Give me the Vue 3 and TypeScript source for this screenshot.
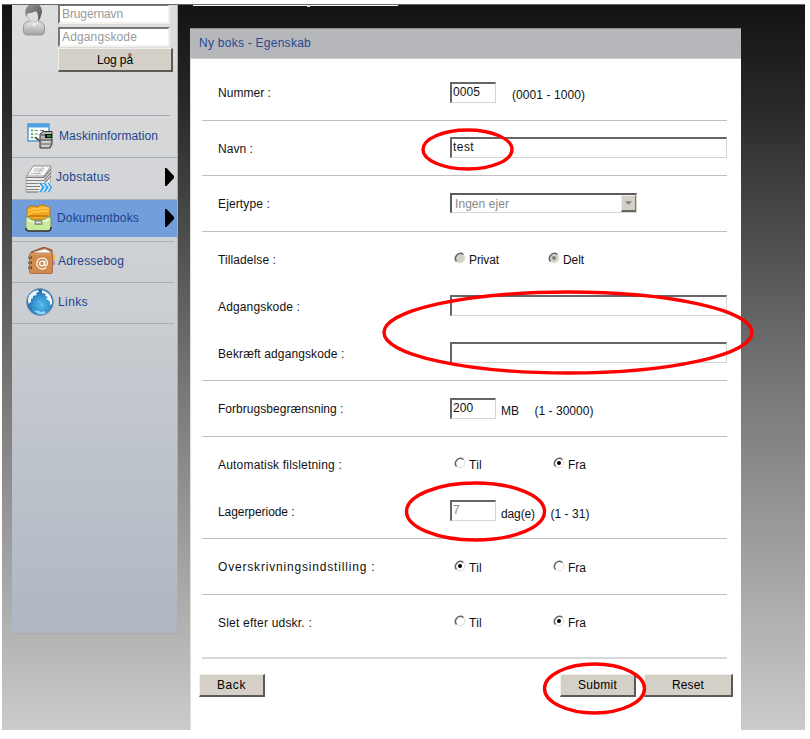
<script setup lang="ts">
import { reactive } from 'vue'

interface Field {
  label: string
  width: number
  kind: 'text' | 'number' | 'select' | 'radio'
  value?: string
  disabled?: boolean
  unit?: string
  unitWidth?: number
  range?: string
  rangeWidth?: number
  options?: { text: string; width: number }[]
}

const sections = reactive<Field[][]>([
  [{ label: 'Nummer :', width: 53, kind: 'number', value: '0005', range: '(0001 - 1000)', rangeWidth: 73 }],
  [{ label: 'Navn :', width: 35, kind: 'text', value: 'test' }],
  [{ label: 'Ejertype :', width: 52, kind: 'select', value: 'Ingen ejer' }],
  [
    {
      label: 'Tilladelse :', width: 58, kind: 'radio', value: 'Delt', disabled: true,
      options: [{ text: 'Privat', width: 30 }, { text: 'Delt', width: 21 }],
    },
    { label: 'Adgangskode :', width: 82, kind: 'text', value: '' },
    { label: 'Bekræft adgangskode :', width: 126.5, kind: 'text', value: '' },
  ],
  [{
    label: 'Forbrugsbegrænsning :', width: 125.5, kind: 'number', value: '200',
    unit: 'MB', unitWidth: 18, range: '(1 - 30000)', rangeWidth: 59,
  }],
  [
    {
      label: 'Automatisk filsletning :', width: 124, kind: 'radio', value: 'Fra',
      options: [{ text: 'Til', width: 13 }, { text: 'Fra', width: 18 }],
    },
    {
      label: 'Lagerperiode :', width: 76.5, kind: 'number', value: '7', disabled: true,
      unit: 'dag(e)', unitWidth: 34, range: '(1 - 31)', rangeWidth: 39,
    },
  ],
  [{
    label: 'Overskrivningsindstilling :', width: 157.5, kind: 'radio', value: 'Til',
    options: [{ text: 'Til', width: 13 }, { text: 'Fra', width: 18 }],
  }],
  [{
    label: 'Slet efter udskr. :', width: 94, kind: 'radio', value: 'Fra',
    options: [{ text: 'Til', width: 13 }, { text: 'Fra', width: 18 }],
  }],
])

const menu = [
  { id: 'machine', text: 'Maskininformation', width: 99, arrow: false },
  { id: 'jobs', text: 'Jobstatus', width: 54, arrow: true },
  { id: 'box', text: 'Dokumentboks', width: 82, arrow: true },
  { id: 'book', text: 'Adressebog', width: 66, arrow: false },
  { id: 'links', text: 'Links', width: 30, arrow: false },
]

const pen = document.createElement('canvas').getContext('2d')!

/* Letter spacing that sets a text to the given width */
function track(text: string, width = 0, size = 12) {
  pen.font = `${size}px "Liberation Sans"`
  return { letterSpacing: `${((width - pen.measureText(text).width) / text.length).toFixed(3)}px` }
}
</script>

<template>
  <div class="screen">
    <aside class="sidebar">
      <div class="login">
        <svg class="avatar" viewBox="0 0 24 32">
          <defs>
            <linearGradient id="coat" x1="0" y1="0" x2="0" y2="1">
              <stop offset="0" stop-color="#e8e8e8" /><stop offset="1" stop-color="#a2a2a2" />
            </linearGradient>
            <linearGradient id="hair" x1="0" y1="0" x2="1" y2="1">
              <stop offset="0" stop-color="#999" /><stop offset="1" stop-color="#4e4e4e" />
            </linearGradient>
          </defs>
          <path d="M1.5 28V22Q2 18 8 17H16Q21 18 22.500 22V28Q22 31 19 31H5Q2 31 1.500 28Z" fill="url(#coat)" stroke="#999" />
          <path d="M8 17 12 23 16 17V13H8Z" fill="#ececec" />
          <path d="M5.500 8V13L8.500 18H14L18 13V7Z" fill="#ddd" stroke="#aaa" stroke-width=".6" />
          <path d="M4 13Q1 1 11 0Q20-1 20 8L18 15L16 17Q17 10 14 7Q8 10 5.500 9Z" fill="url(#hair)" />
        </svg>
        <div class="login-fields">
          <input class="login-input" placeholder="Brugernavn" :style="track('Brugernavn', 61)" />
          <input class="login-input" placeholder="Adgangskode" :style="track('Adgangskode', 75)" />
          <button class="btn login-btn"><span :style="track('Log på', 36)">Log på</span></button>
        </div>
      </div>

      <nav class="menu">
        <div v-for="item in menu" :key="item.id" class="item" :class="item.id">
          <svg v-if="item.id === 'machine'" class="icon" viewBox="0 0 28 28">
            <rect x="1" y="2" width="21" height="17" fill="#fff" stroke="#3b8fd0" stroke-width="1.300" />
            <path d="M1 2H22V5.500H1Z" fill="#4ca2e2" />
            <path d="M4 8.500H6M4 12H6M4 15.500H6" stroke="#2da02b" stroke-width="1.500" />
            <path d="M7.500 8.500H11M13 8.500H17M7.500 12H11M7.500 15.500H10" stroke="#6e9170" />
            <path d="M13 12 16 9.500H25V22L23 26H13Z" fill="#b4b4b4" stroke="#333" />
            <path d="M8 15 13 18V19L9 17Z" fill="#777" stroke="#333" stroke-width=".7" />
            <path d="M14 13H25M14 18H25" stroke="#444" />
            <path d="M14 22H24" stroke="#777" />
            <rect x="18" y="12" width="7" height="4" fill="#111" /><path d="M20 14H24" stroke="#3dbb35" stroke-width="1.500" />
            <path d="M15 20H23M15 24H22" stroke="#eee" />
          </svg>
          <svg v-else-if="item.id === 'jobs'" class="icon" viewBox="0 0 28 28">
            <path d="M1 27V12L8 1H26L25 27Z" fill="#ececec" stroke="#999" stroke-width=".6" />
            <path d="M2 11 8 1H26L19 11Z" fill="#f8f8f8" stroke="#999" />
            <path d="M9 4H20M8 6H18M6 8.500H16M18 2 12 10" stroke="#aaa" stroke-width=".8" />
            <path d="M1 12.500H19L26 4M1 15.500H19L26 7.500M1 18.500H19L26 11M1 21.500H15M1 24.500H14M1 27H13" fill="none" stroke="#808080" stroke-width="1.200" />
            <path d="M13.500 17.500H16L20 22.500 16 27.500H13.500L17 22.500ZM18 17.500H20L24 22.500 20 27.500H18L21 22.500ZM22 17.500H24L27.500 22.500 24 27.500H22L25 22.500Z" fill="#2899ed" stroke="#eef8ff" stroke-width=".5" />
          </svg>
          <svg v-else-if="item.id === 'box'" class="icon" viewBox="0 0 28 28">
            <path d="M2 14V5L5 2H10L12 3 15 1H20L22 3H25V16H2Z" fill="#f4a51c" stroke="#a86b0c" stroke-width=".7" />
            <path d="M3 7 8 5H13L15 4H24M3 11 8 8H14L16 7H24" fill="none" stroke="#ffc643" stroke-width="1.800" />
            <path d="M2 13 5 11H22L25 13" fill="#ce8116" />
            <path d="M.8 14Q1 12 4 13L7 16H19L22 13Q25 12 26 14V24Q26 27 23 27H4Q1 27 .8 24Z" fill="#c9e99d" stroke="#6a8162" stroke-width=".8" />
            <path d="M1 24Q1 27 4 27H23Q26 27 26 23" fill="none" stroke="#343434" stroke-width="1.500" />
            <path d="M3 16Q8 19 13 18T24 16" fill="none" stroke="#e7fad0" stroke-width="2" />
            <rect x="9.500" y="16" width="8" height="5" rx="1" fill="#8b957d" /><path d="M11 18.500H16" stroke="#eee" stroke-width="1.500" />
          </svg>
          <svg v-else-if="item.id === 'book'" class="icon" viewBox="0 0 28 28">
            <path d="M4 5 17 0 25 3V6L5 10Z" fill="#b86737" stroke="#713d20" stroke-width=".7" />
            <path d="M7 5 18 2 24 5V8H7Z" fill="#fff" stroke="#aaa" stroke-width=".6" />
            <path d="M25 7 27.800 8V13H25Z" fill="#edbd25" /><path d="M25 13 27.800 14V18H25Z" fill="#b785df" />
            <rect x="2.500" y="6" width="23" height="20.500" rx="1.500" fill="#d18a50" stroke="#a76238" stroke-width=".8" />
            <path d="M3.500 7H24" stroke="#e7aa73" />
            <path d="M1 10.500H5M1 15.500H5M1 20.500H5" stroke="#573b29" stroke-width="2.200" />
            <path d="M1 10H4M1 15H4M1 20H4" stroke="#d8c8b9" stroke-width=".7" />
            <circle cx="15" cy="16.500" r="2.400" fill="none" stroke="#fff" stroke-width="1.200" />
            <path d="M17.800 13.500V18Q20 20 20.500 16Q20 11 15 11A5.500 5.500 0 1 0 19 20.500" fill="none" stroke="#fff" stroke-width="1.200" />
          </svg>
          <svg v-else class="icon" viewBox="0 0 28 28">
            <defs><radialGradient id="sea" cx=".55" cy=".6"><stop offset="0" stop-color="#56b9ea" /><stop offset=".6" stop-color="#3796d3" /><stop offset="1" stop-color="#276da9" /></radialGradient></defs>
            <circle cx="14" cy="14" r="13.400" fill="url(#sea)" stroke="#7194b0" stroke-width=".8" />
            <path d="M2.500 16Q0 7 8 3L12 2 13 4 10 5 11 7 7 8 7 10 5 11 5 14Z" fill="#e4f4fb" />
            <path d="M16 2Q24 4 26 12V16L24 17 24 14 22 12 20 11 22 9 19 8 20 6 16 5Z" fill="#f0f8fb" />
            <path d="M6 21 9 23 12 22.500 15 24 18 23 20 25Q13 29 6 21Z" fill="#94d5f6" />
            <path d="M13 13 17 18" stroke="#7acdf2" stroke-width=".7" />
          </svg>
          <span class="item-text" :style="track(item.text, item.width)">{{ item.text }}</span>
          <svg v-if="item.arrow" class="arrow" viewBox="0 0 9 18"><path d="M0 0H1.500L9 8V10L1.500 18H0Z" /></svg>
        </div>
      </nav>
    </aside>

    <main class="main">
      <div class="headline"><i class="descender"></i></div>
      <section class="panel">
        <h1 class="title"><span :style="track('Ny boks - Egenskab', 112)">Ny boks - Egenskab</span></h1>
        <form class="form" @submit.prevent>
          <div v-for="(fields, s) in sections" :key="s" class="section">
            <div v-for="field in fields" :key="field.label" class="field">
              <label class="label" :style="track(field.label, field.width)">{{ field.label }}</label>
              <input v-if="field.kind === 'text'" v-model="field.value" class="input wide" />
              <template v-else-if="field.kind === 'number'">
                <input v-model="field.value" class="input short" :disabled="field.disabled" />
                <span v-if="field.unit" class="unit" :style="track(field.unit, field.unitWidth)">{{ field.unit }}</span>
                <span class="range" :class="{ lone: !field.unit }" :style="track(field.range!, field.rangeWidth)">{{ field.range }}</span>
              </template>
              <div v-else-if="field.kind === 'select'" class="select">
                <span :style="track('Ingen ejer', 54)">{{ field.value }}</span>
                <i class="drop"><svg viewBox="0 0 8 4"><path d="M0 0H8L4 4Z" fill="#808080" /></svg></i>
              </div>
              <div v-else class="radios" :class="{ near: field.disabled }">
                <div v-for="option in field.options" :key="option.text" class="radio" @click="!field.disabled && (field.value = option.text)">
                  <svg class="dot" viewBox="0 0 12 12">
                    <circle cx="6" cy="6" r="4.800" :fill="field.disabled ? '#d4d0c8' : '#fff'" stroke="#dedbd5" />
                    <path d="M2.500 9.500A5 5 0 0 1 9.500 2.500" fill="none" stroke="#666" stroke-width="1.500" />
                    <circle v-if="field.value === option.text" cx="6" cy="6" r="2" :fill="field.disabled ? '#808080' : '#000'" />
                  </svg>
                  <span class="option-text" :style="track(option.text, option.width)">{{ option.text }}</span>
                </div>
              </div>
            </div>
          </div>
          <div class="actions">
            <button class="btn back"><span :style="track('Back', 29)">Back</span></button>
            <button class="btn submit"><span :style="track('Submit', 39)">Submit</span></button>
            <button class="btn reset"><span :style="track('Reset', 32)">Reset</span></button>
          </div>
        </form>
      </section>
    </main>

    <svg class="marks" viewBox="0 0 810 739">
      <ellipse cx="467.500" cy="149.500" rx="44.500" ry="19.500" />
      <ellipse cx="568" cy="332.500" rx="184" ry="40.500" />
      <ellipse cx="475.500" cy="511.500" rx="69" ry="28.500" />
      <ellipse cx="594.500" cy="688.500" rx="50" ry="24.500" />
    </svg>
  </div>
</template>

<style>
body {
  background: #fff;
}
</style>

<style scoped>
* {
  box-sizing: border-box;
}

.screen {
  display: flex;
  width: 803px;
  height: 726px;
  margin: 4px 0 0 2px;
  padding: 0 10px;
  overflow: hidden;
  border-top: 1px solid #686868;
  background: linear-gradient(#131313, #292929 14%, #747474 51%, #cbcbcb);
  font: 12px/16px "Liberation Sans", Arial, sans-serif;
  color: #111;
  white-space: nowrap;
}

.sidebar {
  width: 166px;
  height: 629px;
  border: solid #adadad;
  border-width: 0 1px 1px 0;
  background: linear-gradient(#dedede, #cbced2 48%, #aeb7c2);
}

.login {
  display: flex;
  height: 111px;
  border-bottom: 1px solid #a6a8ab;
  margin-right: 7px;
}

.avatar {
  flex: none;
  width: 24px;
  height: 32px;
  margin: -1px 12px 0 9px;
}

.login-fields {
  display: flex;
  flex-direction: column;
  flex: none;
  width: 115px;
  margin-left: 1px;
}

.login-input {
  width: 112px;
  height: 20px;
  margin: -1px 0 3px;
  padding: 0 2px;
  border: 2px solid;
  border-color: #777 #f3f1ec #f3f1ec #777;
  outline: 0;
  background: #fff;
  font: inherit;
}

.login-input + .login-input {
  margin: 0 0 1px;
}

.login-input::placeholder {
  color: #999;
}

.btn {
  height: 23px;
  padding: 0;
  border: solid;
  border-width: 1px 2px 2px 1px;
  border-color: #f1efeb #5c5a57 #5c5a57 #f1efeb;
  background: #d4d0c8;
  font: inherit;
  color: #000;
}

.login-btn {
  width: 115px;
  height: 24px;
}

.menu {
  display: flex;
  flex-direction: column;
}

.item {
  display: flex;
  align-items: center;
  height: 41.5px;
  margin-right: 3px;
  padding: 0 0 2px 14px;
  border-bottom: 1px solid #a9acb0;
  color: #1d438b;
}

.icon {
  flex: none;
  width: 28px;
  height: 28px;
}

.item-text {
  margin-left: 3px;
}

.machine {
  height: 42px;
  margin-right: 0;
}

.machine .icon,
.book .icon {
  margin-left: 1px;
}

.machine .item-text {
  margin-left: 4px;
}

.jobs {
  margin-right: 0;
}

.jobs .icon {
  margin: 3px 0 0 -1px;
}

.box {
  height: 37px;
  margin: 0 0 4px;
  padding-bottom: 0;
  border: 0;
  background: #729edb;
}

.box .icon {
  margin-left: -1px;
}

.box .item-text {
  margin-left: 4px;
}

.book {
  height: 42px;
  border-top: 1px solid #a9acb0;
}

.links .item-text {
  margin-left: 4px;
}

.arrow {
  width: 9px;
  height: 18px;
  margin-left: auto;
  margin-right: 3px;
}

.main {
  width: 551px;
  margin-left: 12px;
}

.headline {
  width: 205px;
  height: 1px;
  margin: 0 0 22px 3px;
  background: #fff;
}

.descender {
  display: block;
  width: 3px;
  height: 2px;
  margin-left: 114px;
  background: #ddd;
}

.panel {
  height: 702px;
  background: #fff;
  border-left: 1px solid #ddd;
}

.title {
  height: 31px;
  margin: 0 0 0 -1px;
  padding: 6px 0 0 9px;
  border-top: 1px solid #8c8c8e;
  border-bottom: 1px solid #ceced0;
  background: #b6b7bb;
  font: inherit;
  color: #244a91;
}

.form {
  padding-left: 11px;
}

.section {
  width: 525px;
  padding: 16.5px 0 17px 16px;
  border-bottom: 1px solid #bebfc3;
}

.section:first-child {
  padding-top: 22.5px;
}

.section:nth-last-child(2) {
  padding-bottom: 24.5px;
  border-bottom: 2px solid #d8d8dc;
}

.field {
  display: flex;
  height: 21px;
}

.field + .field {
  margin-top: 26px;
}

.label {
  width: 232px;
  padding-top: 3.5px;
}

.input {
  height: 21px;
  padding: 0 0 2px 1px;
  border: solid;
  border-width: 2px 1px 1px 2px;
  border-color: #666 #d8d5ce #d8d5ce #666;
  border-radius: 0;
  outline: 0;
  background: #fff;
  font: inherit;
  letter-spacing: .1px;
  color: #111;
}

.input:disabled {
  color: #888;
}

.wide {
  width: 277px;
  letter-spacing: .45px;
}

.short {
  width: 46px;
}

.unit,
.range {
  padding-top: 5.5px;
}

.unit {
  margin-left: 5px;
}

.range {
  margin-left: 15.5px;
}

.lone {
  margin-left: 16px;
}

.select {
  display: flex;
  justify-content: space-between;
  width: 187px;
  height: 20px;
  padding-left: 3px;
  border: solid;
  border-width: 2px 1px 1px 2px;
  border-color: #5c5c5c #d8d5ce #d8d5ce #5c5c5c;
  color: #888;
}

.select > span {
  padding-top: 1px;
}

.drop {
  display: flex;
  align-items: center;
  justify-content: center;
  width: 15px;
  height: 17px;
  border: solid;
  border-width: 1px 1px 2px 1px;
  border-color: #eee #777 #666 #eee;
  background: #d4d0c8;
}

.drop svg {
  width: 7px;
  height: 4px;
}

.radios {
  display: flex;
  padding-left: 4px;
}

.radio {
  display: flex;
  width: 99px;
}

.near .radio {
  width: 94px;
}

.dot {
  width: 12px;
  height: 12px;
  margin: 4px 3px 0 0;
}

.option-text {
  padding-top: 4px;
}

.actions {
  display: flex;
  margin: 15px 0 0 -3px;
}

.back {
  width: 66px;
}

.submit {
  width: 76px;
  margin-left: 295px;
}

.reset {
  width: 89px;
  margin-left: 8px;
}

.login .avatar {
  margin: -1px 13px 0 10px;
}

.marks {
  position: absolute;
  top: 0;
  left: 0;
  width: 810px;
  height: 739px;
  pointer-events: none;
}

.login .login-fields {
  margin-left: -1px;
}

.marks ellipse {
  fill: none;
  stroke: #f00;
  stroke-width: 3.4;
}
</style>
